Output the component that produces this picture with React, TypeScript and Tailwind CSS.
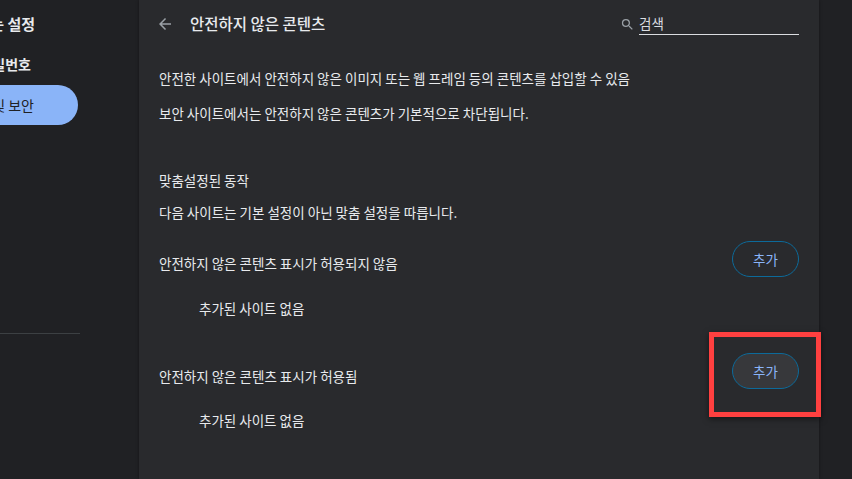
import React from "react";

const font = { fontFamily: '"Noto Sans CJK KR", "Noto Sans", sans-serif' };

function AddButton({ hover }: { hover?: boolean }) {
  return (
    <button
      className={`w-[67px] h-[36px] rounded-full border border-[#0c6a9a] text-[13.5px] text-[#8ab4f8] flex items-center justify-center ${
        hover ? "bg-[#37383b]" : "bg-transparent"
      }`}
    >
      추가
    </button>
  );
}

export default function App() {
  return (
    <div
      className="w-[852px] h-[479px] bg-[#202124] flex overflow-hidden text-[#e8eaed] relative"
      style={font}
    >
      {/* Sidebar */}
      <div className="w-[139px] shrink-0 overflow-hidden flex flex-col">
        <div className="h-[48px] flex items-center">
          <div className="w-[35px] flex justify-end whitespace-nowrap text-[15px] font-bold">
            자주 사용하는 설정
          </div>
        </div>
        <div className="h-[32px] flex items-center">
          <div className="w-[31px] flex justify-end whitespace-nowrap text-[14px] font-bold">
            자동 완성 및 비밀번호
          </div>
        </div>
        <div className="mt-[5px] h-[40px] w-[78px] rounded-r-full bg-[#8ab4f8] flex items-center">
          <div className="w-[34px] flex justify-end whitespace-nowrap text-[14px] text-[#202124]">
            개인 정보 보호 및 보안
          </div>
        </div>
        <div className="mt-[208px] h-px w-[80px] bg-[#3c4043]" />
      </div>

      {/* Card */}
      <div className="w-[680px] shrink-0 bg-[#292a2d] shadow-[0_0_3px_rgba(0,0,0,0.4)] flex flex-col text-[13.5px]">
        <div className="h-[48px] flex items-center pl-[17px] pr-[20px]">
          <svg width="18" height="18" viewBox="0 0 24 24" className="text-[#9aa0a6]">
            <path
              d="M20 11H7.83l5.59-5.59L12 4l-8 8 8 8 1.41-1.41L7.83 13H20v-2z"
              fill="currentColor"
            />
          </svg>
          <div className="ml-[16px] text-[15.5px] font-medium">안전하지 않은 콘텐츠</div>
          <div className="flex-1" />
          <div className="flex items-center">
            <svg width="15" height="15" viewBox="0 0 24 24" className="text-[#9aa0a6] mr-[4px]">
              <path
                d="M15.5 14h-.79l-.28-.27A6.47 6.47 0 0 0 16 9.5 6.5 6.5 0 1 0 9.5 16c1.61 0 3.09-.59 4.23-1.57l.27.28v.79l5 4.99L20.49 19l-4.99-5zm-6 0C7.01 14 5 11.990 5 9.5S7.01 5 9.5 5 14 7.01 14 9.5 11.99 14 9.5 14z"
                fill="currentColor"
              />
            </svg>
            <div className="w-[160px] h-[21px] border-b border-[#dadce0] text-[13.5px] leading-[18px] text-[#dadce0]">
              검색
            </div>
          </div>
        </div>

        <div className="pl-[20px] pr-[20px] flex flex-col">
          <div className="h-[36px] mt-[12px] flex items-center">
            안전한 사이트에서 안전하지 않은 이미지 또는 웹 프레임 등의 콘텐츠를 삽입할 수 있음
          </div>
          <div className="h-[36px] -mt-[1px] flex items-center">
            보안 사이트에서는 안전하지 않은 콘텐츠가 기본적으로 차단됩니다.
          </div>
          <div className="h-[32px] mt-[33px] flex items-center">맞춤설정된 동작</div>
          <div className="h-[32px] flex items-center">
            다음 사이트는 기본 설정이 아닌 맞춤 설정을 따릅니다.
          </div>

          <div className="h-[54px] mt-[4px] flex items-center justify-between">
            <span className="mt-[8px]">안전하지 않은 콘텐츠 표시가 허용되지 않음</span>
            <AddButton />
          </div>
          <div className="h-[40px] mt-[2px] flex items-center pl-[40px]">
            추가된 사이트 없음
          </div>

          <div className="h-[54px] mt-[16px] flex items-center justify-between">
            <span className="mt-[10px]">안전하지 않은 콘텐츠 표시가 허용됨</span>
            <AddButton hover />
          </div>
          <div className="h-[40px] mt-[2px] flex items-center pl-[40px]">추가된 사이트 없음</div>
        </div>
      </div>
      <div className="flex-1" />

      {/* Red highlight box */}
      <div className="absolute left-[709px] top-[332px] w-[112px] h-[85px] border-[5px] border-[#ff4040] shadow-[0_2px_6px_rgba(0,0,0,0.5)]" />
    </div>
  );
}
